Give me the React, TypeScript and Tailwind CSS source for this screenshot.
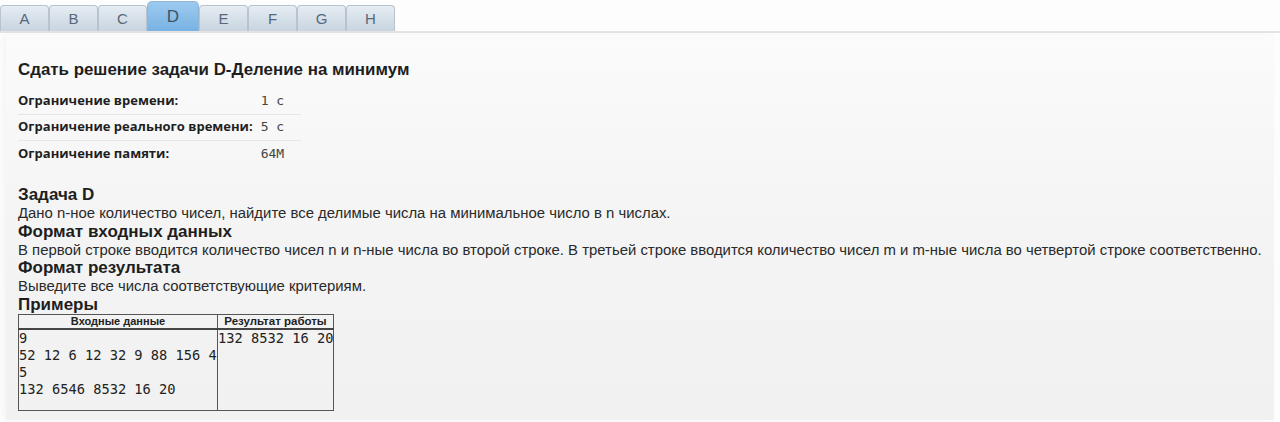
import React from 'react'

const tabs = ['A', 'B', 'C', 'D', 'E', 'F', 'G', 'H']

const limits = [
  { label: 'Ограничение времени:', value: '1 с' },
  { label: 'Ограничение реального времени:', value: '5 с' },
  { label: 'Ограничение памяти:', value: '64M' },
]

const inputLines = ['9', '52 12 6 12 32 9 88 156 4', '5', '132 6546 8532 16 20']

export default function App() {
  return (
    <div className="min-h-[422px] bg-[#fdfdfd] font-['Liberation_Sans',Arial,sans-serif] text-[#222]">
      {/* Tabs */}
      <div className="flex items-end h-[33px] border-b-[2px] border-[#e4e4e4]">
        {tabs.map((t) =>
          t === 'D' ? (
            <div
              key={t}
              className="w-[52px] h-[30px] flex items-start justify-center pt-[2px] rounded-t-[5px] border border-b-0 border-[#8fb6d6] bg-gradient-to-b from-[#9ccaef] to-[#78b2e2] text-[17px] text-[#3c5468]"
            >
              {t}
            </div>
          ) : (
            <div
              key={t}
              className="w-[49px] h-[26px] flex items-center justify-center pt-[2px] rounded-t-[4px] border border-b-0 border-[#b7c3cf] bg-gradient-to-b from-[#e6edf3] to-[#c8d4df] text-[15px] text-[#56687a]"
            >
              {t}
            </div>
          )
        )}
      </div>

      {/* Content */}
      <div className="ml-[6px] mr-[6px] mt-[2px] min-h-[385px] bg-gradient-to-b from-[#fbfbfb] via-[#f4f4f4] to-[#f1f1f1] shadow-[-3px_0_6px_rgba(0,0,0,0.04)] pl-[12px] pt-[24px]">
        <h1 className="text-[16.9px] font-bold text-[#1e1e1e] leading-[22px]">
          Сдать решение задачи D-Деление на минимум
        </h1>

        <table className="mt-[7px] border-collapse">
          <tbody>
            {limits.map((l, i) => (
              <tr key={l.label} className={i > 0 ? 'border-t border-[#e6e6e6]' : ''}>
                <td className="h-[26px] pr-[8px] font-['Open_Sans',sans-serif] font-bold text-[13px] text-[#1f1f1f] whitespace-nowrap">
                  {l.label}
                </td>
                <td className="w-[40px] font-['DejaVu_Sans_Mono',monospace] text-[13px] text-[#444]">{l.value}</td>
              </tr>
            ))}
          </tbody>
        </table>

        <div className="mt-[20px] text-[14.9px] leading-[18.5px] text-[#2a2a2a]">
          <h2 className="text-[17px] font-bold leading-[18px] text-[#1e1e1e]">Задача D</h2>
          <p>Дано n-ное количество чисел, найдите все делимые числа на минимальное число в n числах.</p>
          <h2 className="text-[17px] font-bold leading-[18px] text-[#1e1e1e]">Формат входных данных</h2>
          <p>
            В первой строке вводится количество чисел n и n-ные числа во второй строке. В третьей строке вводится
            количество чисел m и m-ные числа во четвертой строке соответственно.
          </p>
          <h2 className="text-[17px] font-bold leading-[18px] text-[#1e1e1e]">Формат результата</h2>
          <p>Выведите все числа соответствующие критериям.</p>
          <h2 className="text-[17px] font-bold leading-[18px] text-[#1e1e1e]">Примеры</h2>
        </div>

        <table className="table-fixed w-[316px] border-collapse border border-[#555] text-[#222]">
          <thead>
            <tr className="border-b-2 border-[#444]">
              <th className="h-[15px] w-[199px] border-r border-[#555] text-[11px] leading-[12px] font-bold">
                Входные данные
              </th>
              <th className="text-[11.5px] leading-[12px] font-bold">Результат работы</th>
            </tr>
          </thead>
          <tbody>
            <tr>
              <td className="h-[81px] align-top border-r border-[#555] font-['DejaVu_Sans_Mono',monospace] text-[13.7px] leading-[17px] whitespace-pre">
                {inputLines.join('\n')}
              </td>
              <td className="align-top font-['DejaVu_Sans_Mono',monospace] text-[13.7px] leading-[17px] whitespace-pre">
                132 8532 16 20
              </td>
            </tr>
          </tbody>
        </table>
      </div>
    </div>
  )
}
